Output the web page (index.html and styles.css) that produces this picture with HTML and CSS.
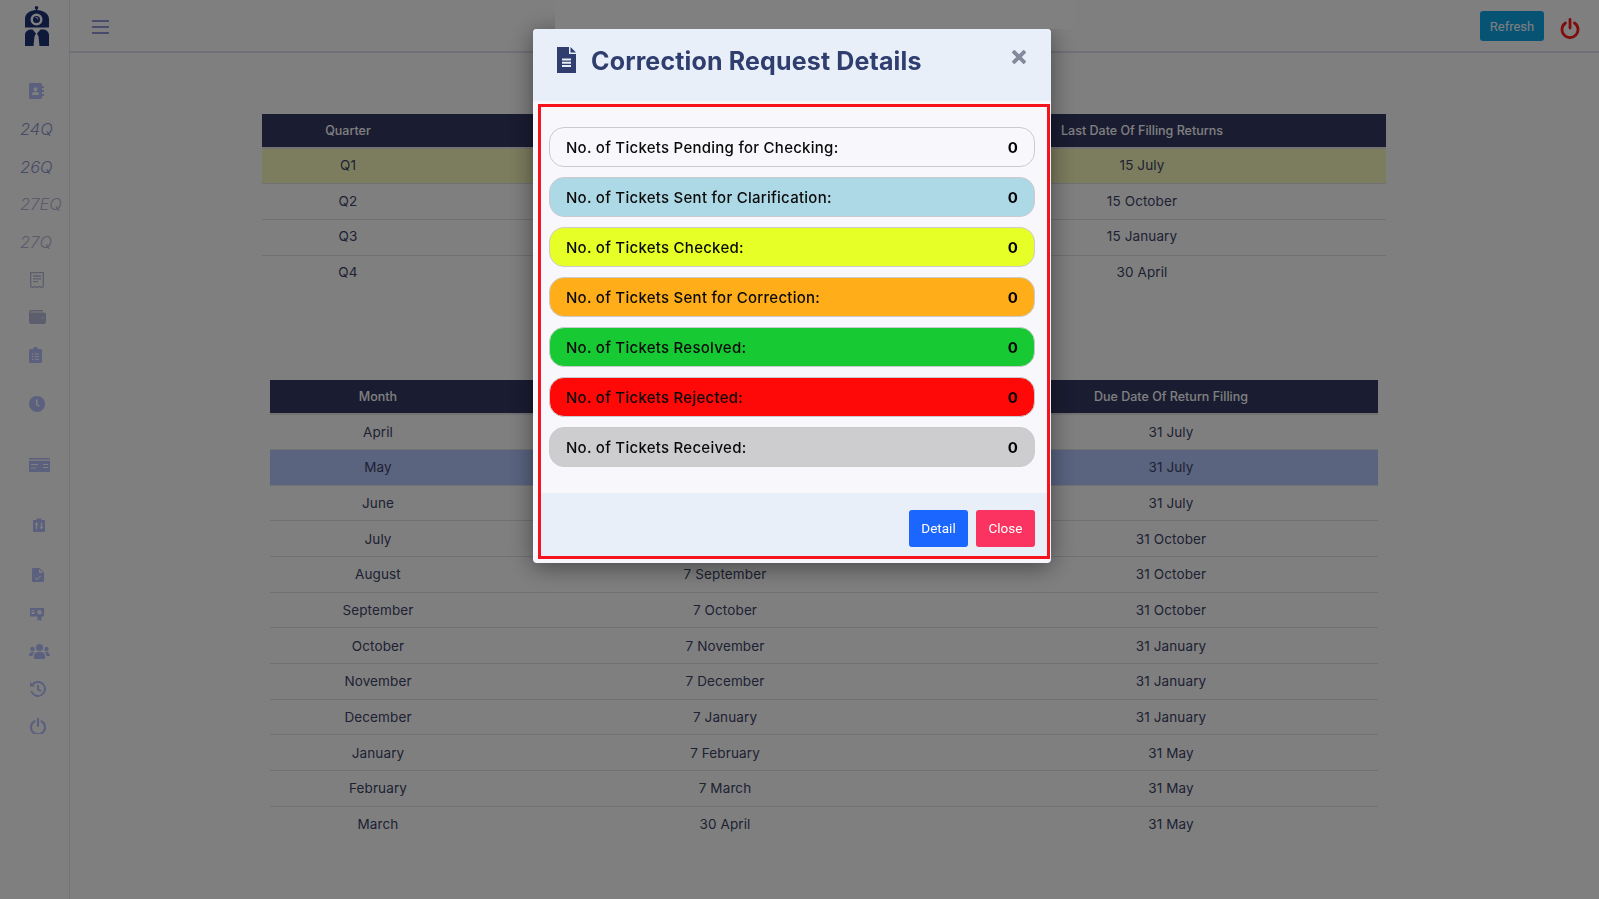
FILE: index.html
```html
<!DOCTYPE html>
<html lang="en">
<head>
<meta charset="UTF-8">
<meta name="viewport" content="width=device-width,initial-scale=1.0">
<title>Correction Request Details</title>
<link rel="stylesheet" href="styles.css">
</head>
<body>

<!-- sidebar -->
<aside class="sidebar">
  <div class="logo">
    <svg viewBox="0 0 26 40" width="26" height="40">
      <circle cx="12.500" cy="1.800" r="1.800" fill="#1c3278"/>
      <rect x="11.800" y="2" width="1.400" height="3" fill="#1c3278"/>
      <path fill="#1c3278" fill-rule="evenodd" d="M1 21.500V13C1 7.500 6 4 12.500 4S25 7.500 25 13v8.500zM12.500 7.500a6 6 0 1 0 0 12a6 6 0 0 0 0-12z"/>
      <path fill="#1c3278" fill-rule="evenodd" d="M12.500 10a3.500 3.500 0 1 0 0 7a3.500 3.500 0 0 0 0-7zM11 11.500a2 2 0 0 1 3 2.500a3 3 0 0 0-3-2.500z"/>
      <path fill="#1c3278" d="M1 40V29c0-3.500 3-5.500 6.500-5.500h1L12 27.500l-1.500 3L9.500 40zM25 40V29c0-3.500-3-5.500-6.500-5.500h-2L13 27.500l1.500 3L15.500 40z"/>
    </svg>
  </div>
  <nav class="side-nav">
    <a class="side-item side-first"><svg width="15" height="16" viewBox="0 0 15 16"><path fill="#b8c0ff" fill-rule="evenodd" d="M1.500 0h10A1.500 1.500 0 0 1 13 1.500V3h2v2h-2v2h2v2h-2v2h2v2h-2v1.500a1.500 1.500 0 0 1-1.500 1.500h-10A1.500 1.500 0 0 1 0 14.500v-13A1.500 1.500 0 0 1 1.500 0zM6.500 4.200a2 2 0 1 0 0 4a2 2 0 0 0 0-4zM3 12h7v-1c0-1-1-2-2-2H5c-1 0-2 1-2 2z"/></svg></a>
    <a class="side-item side-text">24Q</a>
    <a class="side-item side-text">26Q</a>
    <a class="side-item side-text side-faded">27EQ</a>
    <a class="side-item side-text side-faded">27Q</a>
    <a class="side-item side-receipt"><svg width="14" height="16" viewBox="0 0 14 16"><path fill="none" stroke="#b8bcdc" stroke-width="1.300" d="M.7.7h12.600v13.800l-2.100 1-2.100-1-2.100 1-2.100-1-2.100 1-2.100-1z"/><path stroke="#b8bcdc" stroke-width="1.300" d="M3 4h8M3 6.800h8M3 9.600h5"/></svg></a>
    <a class="side-item"><svg width="17" height="14" viewBox="0 0 17 14"><path fill="#b8bcdc" fill-rule="evenodd" d="M2 0h12v1.500H2a.5.5 0 0 0 0 1h13a2 2 0 0 1 2 2V12a2 2 0 0 1-2 2H2a2 2 0 0 1-2-2V2a2 2 0 0 1 2-2zM13 7.500v1h1.500v-1z"/></svg></a>
    <a class="side-item"><svg width="13" height="16" viewBox="0 0 13 16"><path fill="#b8c0ff" fill-rule="evenodd" d="M4.300 2a2.200 2.200 0 0 1 4.400 0H11.500A1.500 1.500 0 0 1 13 3.500v11a1.500 1.500 0 0 1-1.500 1.500h-10A1.500 1.500 0 0 1 0 14.500v-11A1.500 1.500 0 0 1 1.500 2zM3 6.300v1.200h1.200V6.300zM3 9v1.200h1.200V9zM3 11.700v1.200h1.200v-1.200zM5.500 6.400v1h4.500v-1zM5.500 9.100v1h4.500v-1zM5.500 11.800v1h4.500v-1z"/></svg></a>
    <a class="side-item side-clock"><svg width="16" height="16" viewBox="0 0 16 16"><circle cx="8" cy="8" r="8" fill="#b8c0ff"/><path fill="none" stroke="#fff" stroke-width="1.500" d="M7.800 3.500V8.500l2.500 1.700"/></svg></a>
    <a class="side-item side-card"><svg width="21" height="14" viewBox="0 0 21 14"><path fill="#b8c0ff" fill-rule="evenodd" d="M0 0h21v1.400H0zM0 2.800h21V14H0zM2 6v1h7V6zM2 9.500v1h5v-1zM14 6v1h5V6zM14 9v1h5V9z"/></svg></a>
    <a class="side-item side-transfer"><svg width="12" height="14" viewBox="0 0 12 14"><path fill="#b8c0ff" fill-rule="evenodd" d="M0 2h3.500V.5h5V2H12v12H0zM3.500 4L1.500 6.800h1.300V11h1.400V6.800h1.300zM8.500 11.500l2-2.800H9.200V4.500H7.800v4.200H6.500z"/></svg></a>
    <a class="side-item side-check"><svg width="12" height="14" viewBox="0 0 12 14"><path fill="#b8c0ff" fill-rule="evenodd" d="M1 0h6.500L12 4.500V13a1 1 0 0 1-1 1H1a1 1 0 0 1-1-1V1a1 1 0 0 1 1-1zM7 1v4h4zM3.500 9.500l-.7.700L5 12.300l4-4-.7-.7L5 10.900z"/></svg></a>
    <a class="side-item side-cert"><svg width="14" height="13" viewBox="0 0 14 13"><path fill="#b8c0ff" fill-rule="evenodd" d="M0 0h14v8.500h-2.500V13L9.500 11.800 7.500 13V8.500H0zM1.500 2v1h3V2zM1.500 4v2h3V4zM9.500 2a2.300 2.300 0 1 0 0 4.600a2.300 2.300 0 0 0 0-4.600z"/></svg></a>
    <a class="side-item side-users"><svg width="21" height="15" viewBox="0 0 21 15"><g fill="#b8c0ff"><circle cx="10.500" cy="3.500" r="3.500"/><circle cx="3.500" cy="5" r="2.200"/><circle cx="17.500" cy="5" r="2.200"/><path d="M5 15v-3c0-2.500 2-4 4-4h3c2 0 4 1.500 4 4v3zM0 12c0-2 1.500-4 3-4h2.500C4.300 9 3.700 10.500 3.500 12zM21 12c0-2-1.500-4-3-4h-2.500c1.200 1 1.800 2.500 2 4z"/></g></svg></a>
    <a class="side-item side-history"><svg width="16" height="16" viewBox="0 0 16 16"><path fill="none" stroke="#b8c0ff" stroke-width="2" d="M2.200 4A7 7 0 1 1 1.300 10M8 4v4.500l3 1.700"/><path fill="#b8c0ff" d="M0 1l5 4.500H0z"/></svg></a>
    <a class="side-item side-off"><svg width="16" height="16" viewBox="0 0 16 16"><path fill="none" stroke="#b8c0ff" stroke-width="2.200" stroke-linecap="round" d="M4.500 3.300a7 7 0 1 0 7 0M8 1v7"/></svg></a>
  </nav>
</aside>

<!-- top bar + tables -->
<div class="main">
  <header class="topbar">
    <button class="burger"><span></span><span></span><span></span></button>
    <div class="top-right">
      <button class="btn-refresh">Refresh</button>
      <svg class="power" width="20" height="21" viewBox="0 0 20 21"><path fill="none" stroke="#ff1a1a" stroke-width="2.800" stroke-linecap="round" d="M5.500 5a8 8 0 1 0 9 0M10 1.500v8.500"/></svg>
    </div>
  </header>

  <section class="content">
    <table class="tbl tbl-quarter">
      <colgroup><col class="c1"><col class="c2"><col class="c3"></colgroup>
      <thead><tr><th>Quarter</th><th></th><th>Last Date Of Filling Returns</th></tr></thead>
      <tbody>
        <tr class="now-quarter"><td>Q1</td><td></td><td>15 July</td></tr>
        <tr><td>Q2</td><td></td><td>15 October</td></tr>
        <tr><td>Q3</td><td></td><td>15 January</td></tr>
        <tr><td>Q4</td><td></td><td>30 April</td></tr>
      </tbody>
    </table>

    <table class="tbl tbl-month">
      <colgroup><col class="c1"><col class="c2"><col class="c3"></colgroup>
      <thead><tr><th>Month</th><th></th><th>Due Date Of Return Filling</th></tr></thead>
      <tbody>
        <tr><td>April</td><td></td><td>31 July</td></tr>
        <tr class="now-month"><td>May</td><td></td><td>31 July</td></tr>
        <tr><td>June</td><td></td><td>31 July</td></tr>
        <tr><td>July</td><td></td><td>31 October</td></tr>
        <tr><td>August</td><td>7 September</td><td>31 October</td></tr>
        <tr><td>September</td><td>7 October</td><td>31 October</td></tr>
        <tr><td>October</td><td>7 November</td><td>31 January</td></tr>
        <tr><td>November</td><td>7 December</td><td>31 January</td></tr>
        <tr><td>December</td><td>7 January</td><td>31 January</td></tr>
        <tr><td>January</td><td>7 February</td><td>31 May</td></tr>
        <tr><td>February</td><td>7 March</td><td>31 May</td></tr>
        <tr><td>March</td><td>30 April</td><td>31 May</td></tr>
      </tbody>
    </table>
  </section>
</div>

<!-- modal -->
<div class="backdrop"></div>
<div class="modal">
  <div class="modal-head">
    <svg class="doc-icon" width="19" height="26" viewBox="0 0 19 26"><path fill="#2f3e6e" fill-rule="evenodd" d="M0 0h12v7h7v19H0zM13.500 0L19 5.500h-5.500zM5 11.500v2h9v-2zM5 14.800v2h9v-2zM5 18.100v2h9v-2z"/></svg>
    <h2>Correction Request Details</h2>
    <svg class="modal-x" width="14" height="14" viewBox="0 0 14 14"><path stroke="#848a9c" stroke-width="3.800" d="M1 1l12 12M13 1L1 13"/></svg>
  </div>
  <div class="modal-frame">
    <div class="modal-body">
      <div class="pill pill-white"><span>No. of Tickets Pending for Checking:</span><b>0</b></div>
      <div class="pill pill-blue"><span>No. of Tickets Sent for Clarification:</span><b>0</b></div>
      <div class="pill pill-yellow"><span>No. of Tickets Checked:</span><b>0</b></div>
      <div class="pill pill-orange"><span>No. of Tickets Sent for Correction:</span><b>0</b></div>
      <div class="pill pill-green"><span>No. of Tickets Resolved:</span><b>0</b></div>
      <div class="pill pill-red"><span>No. of Tickets Rejected:</span><b>0</b></div>
      <div class="pill pill-grey"><span>No. of Tickets Received:</span><b>0</b></div>
    </div>
    <div class="modal-foot">
      <button class="btn btn-detail">Detail</button>
      <button class="btn btn-close">Close</button>
    </div>
  </div>
</div>
<!-- the modal shadow stops at the top bar right of this point -->
<div class="shadow-cut"></div>

</body>
</html>
```

FILE: styles.css
```css
*{box-sizing:border-box;margin:0;padding:0}
body{height:899px;overflow:hidden;display:flex;background:#fff;color:#3d4468;font-family:Inter,"Noto Sans",sans-serif;font-size:13.5px}
button{border:none;cursor:pointer;font-family:Roboto,sans-serif}

/* sidebar */
.sidebar{width:70px;flex:none;height:100%;border-right:1.5px solid #e4e6ee;background:#fff}
.logo{height:72px;padding:6px 0 0 5px;display:flex;justify-content:center}
.side-nav{display:flex;flex-direction:column}
.side-item{height:37.7px;display:flex;align-items:center;padding-left:29px}
.side-first{margin-bottom:.5px}
.side-text{padding-left:20px;font-style:italic;font-size:16.5px;font-weight:300;color:#8e96d0}
.side-faded{color:#b4b8d4}
.side-receipt{padding-left:30px}
.side-clock{margin-top:11px}
.side-card{margin-top:23px}
.side-transfer{margin-top:22.500px;padding-left:33px}
.side-check{margin-top:13px;padding-left:32px}
.side-cert{margin-top:1.500px;padding-left:30px}
.side-users{margin-top:-.8px;padding-left:29px}
.side-history{padding-left:30px}
.side-off{margin-top:-1px;padding-left:30px}

/* top bar */
.main{flex:1;min-width:0}
.topbar{height:53px;display:flex;align-items:center;justify-content:space-between;border-bottom:2px solid #dfe3ec;padding:0 19px 0 22px}
.burger{background:none;width:17px;display:flex;flex-direction:column;gap:4px;margin-top:2px}
.burger span{display:block;height:2px;background:#8f98d8}
.top-right{display:flex;align-items:center;gap:16px}
.btn-refresh{width:64px;height:30px;margin-top:1px;border-radius:3px;background:#0fa6e8;color:#fff;font-size:13px}
.power{margin-top:5px}

/* tables */
.content{padding-top:61px}
.tbl{border-collapse:collapse;table-layout:fixed;text-align:center}
.tbl th{height:34px;background:#343864;color:#fff;font-weight:500;font-size:12.5px;border-bottom:2px solid #e6e6e6}
.tbl td{height:35.700px;letter-spacing:.12px;border-bottom:1px solid #dee2e6}
.tbl tbody tr:last-child td{border-bottom:none}
.tbl-quarter{width:1124px;margin-left:192px}
.tbl-quarter td{padding-bottom:2px}
.tbl-quarter .c1{width:172px}
.tbl-quarter .c2{width:464px}
.tbl-month{width:1108px;margin:89px 0 0 200px}
.tbl-month .c1{width:216px}
.tbl-month .c2{width:478px}
.now-quarter td{background:#f8fabc}
.now-month td{background:#b4c8ff}

/* modal */
.backdrop{position:fixed;inset:0;background:rgba(0,0,0,.5)}
.modal{position:fixed;left:533px;top:29px;width:518px;height:534px;background:#f7f7fc;border-radius:4px;box-shadow:0 4px 24px rgba(0,0,0,.45);overflow:hidden}
.shadow-cut{position:fixed;left:555px;top:0;width:520px;height:29px;background:#808080}
.modal-head{height:72px;background:#e8eff9;display:flex;align-items:flex-start;padding:18px 25px 0 24px}
.doc-icon{flex:none}
.modal-head h2{flex:1;margin-left:15px;padding-top:1px;font-size:25px;letter-spacing:.15px;line-height:26px;font-weight:700;color:#2f3e6e}
.modal-x{flex:none;margin-top:3px}
.modal-frame{margin:3px 1px 0 5px;height:455px;border:3px solid #f5141e;display:flex;flex-direction:column}
.modal-body{flex:1;padding:20px 12px 0 8px;display:flex;flex-direction:column;gap:10px}
.pill{height:40px;flex:none;border-radius:15px;border:1px solid #cbcbcb;display:flex;align-items:center;justify-content:space-between;padding:0 16px;color:#0a0a0a;font-size:15px;letter-spacing:.26px;font-weight:500}
.pill b{font-weight:700;color:#000}
.pill-white{background:#f7f7fc}
.pill-blue{background:#add8e6}
.pill-yellow{background:#e6ff26}
.pill-orange{background:#ffae1a}
.pill-green{background:#17c933}
.pill-red{background:#ff0808}
.pill-grey{background:#cdcdcf}
.modal-foot{height:63px;flex:none;background:#e8eff9;display:flex;justify-content:flex-end;align-items:flex-start;gap:8px;padding:17px 12px 0 0}
.btn{width:59px;height:37px;padding-bottom:2px;border-radius:3px;color:#fff;font-size:13.5px}
.btn-detail{background:#1a66ff}
.btn-close{background:#fb3360}
```
